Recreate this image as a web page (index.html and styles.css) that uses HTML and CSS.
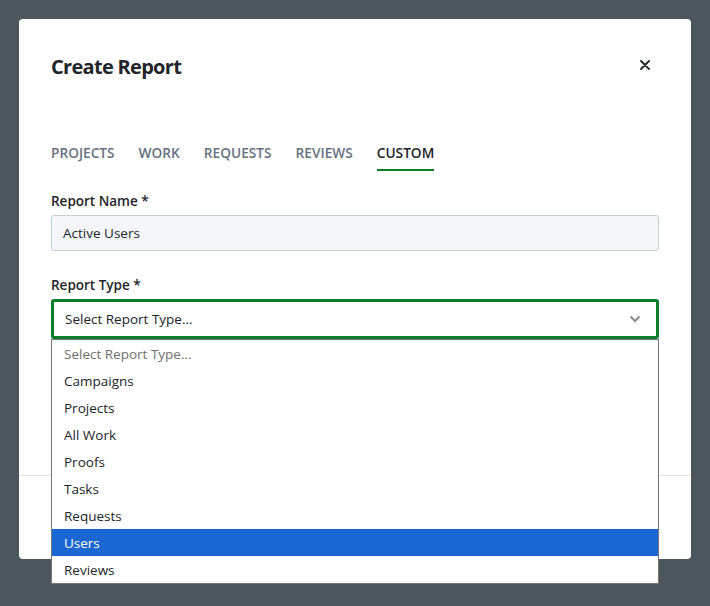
FILE: index.html
```html
<!DOCTYPE html>
<html>
<head>
<meta charset="utf-8">
<link rel="stylesheet" href="styles.css">
</head>
<body>
<div class="modal">
  <div class="modal-main">
    <div class="header">
      <h1 class="title">Create Report</h1>
      <span class="close">
        <svg width="10" height="10" viewBox="0 0 10 10"><path d="M1 1L9 9M9 1L1 9" stroke="#212529" stroke-width="1.8" stroke-linecap="round"/></svg>
      </span>
    </div>
    <div class="tabs">
      <span class="tab">PROJECTS</span>
      <span class="tab">WORK</span>
      <span class="tab">REQUESTS</span>
      <span class="tab">REVIEWS</span>
      <span class="tab active">CUSTOM</span>
    </div>
    <div class="field">
      <label class="label">Report Name *</label>
      <div class="input">Active Users</div>
    </div>
    <div class="field field-type">
      <label class="label">Report Type *</label>
      <div class="select-wrap">
        <div class="select">
          <span>Select Report Type...</span>
          <svg class="chev" width="12" height="8" viewBox="0 0 12 8"><path d="M1.5 1.5L6 6L10.5 1.5" fill="none" stroke="#8a8a8a" stroke-width="2"/></svg>
        </div>
        <ul class="options">
          <li class="opt placeholder">Select Report Type...</li>
          <li class="opt">Campaigns</li>
          <li class="opt">Projects</li>
          <li class="opt">All Work</li>
          <li class="opt">Proofs</li>
          <li class="opt">Tasks</li>
          <li class="opt">Requests</li>
          <li class="opt selected">Users</li>
          <li class="opt">Reviews</li>
        </ul>
      </div>
    </div>
  </div>
  <div class="footer"></div>
</div>
</body>
</html>
```
FILE: styles.css
```css
* { box-sizing: border-box; }
html, body { margin: 0; padding: 0; }
body {
  width: 710px;
  height: 606px;
  background: #4c565c;
  padding: 19px;
  font-family: "Open Sans", "Noto Sans", sans-serif;
  color: #212529;
  overflow: hidden;
}
.modal {
  width: 672px;
  height: 540px;
  background: #fff;
  border-radius: 4px;
  display: flex;
  flex-direction: column;
}
.modal-main {
  height: 457px;
  padding: 32px 32px 0 32px;
  border-bottom: 1px solid #dee2e6;
}
.footer { flex: 1; }
.header {
  display: flex;
  align-items: center;
  justify-content: space-between;
  height: 32px;
}
.title {
  margin: 0;
  font-size: 20px;
  font-weight: 700;
  line-height: 32px;
  letter-spacing: -0.7px;
}
.close {
  display: flex;
  margin-right: 9px;
  margin-bottom: 4px;
}
.tabs {
  margin-top: 60px;
  display: flex;
  gap: 24px;
}
.tab {
  font-size: 13.7px;
  font-weight: 600;
  line-height: 20px;
  color: #66727f;
  padding-bottom: 6px;
  border-bottom: 2px solid transparent;
}
.tab.active {
  color: #212529;
  border-bottom-color: #0a7d2a;
}
.field { margin-top: 20px; }
.field-type { margin-top: 24px; }
.label {
  display: block;
  font-size: 13.5px;
  font-weight: 600;
  line-height: 20px;
  margin-bottom: 4px;
}
.input {
  height: 36px;
  background: #f4f6f9;
  border: 1px solid #c5ced8;
  border-radius: 3px;
  padding: 0 11px;
  font-size: 13.5px;
  line-height: 34px;
}
.select-wrap { position: relative; }
.select {
  height: 40px;
  border: 3px solid #0a7d2a;
  border-radius: 3px;
  padding: 0 11px;
  display: flex;
  align-items: center;
  justify-content: space-between;
  font-size: 13.5px;
}
.chev { margin-right: 4px; }
.options {
  position: absolute;
  left: 0;
  right: 0;
  top: 40px;
  margin: 0;
  padding: 0;
  list-style: none;
  background: #fff;
  border: 1px solid #767676;
  z-index: 5;
}
.opt {
  height: 27px;
  line-height: 29px;
  padding: 0 12px;
  font-size: 13.5px;
  color: #212529;
}
.opt.placeholder { color: #6f6f6f; }
.opt.selected { background: #1a66d2; color: #fff; }
```
